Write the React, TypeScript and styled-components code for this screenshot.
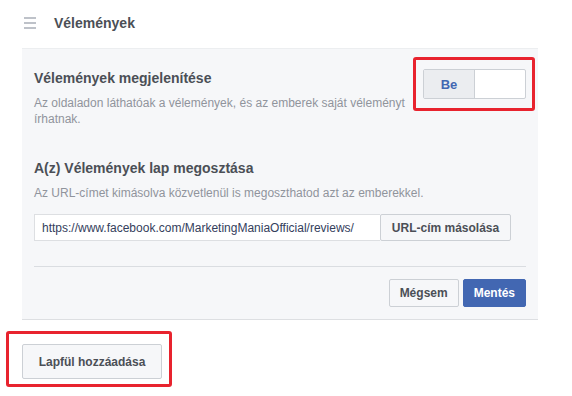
import React from "react";
import styled, { createGlobalStyle } from "styled-components";

const Global = createGlobalStyle`
  html, body { margin: 0; padding: 0; background: #ffffff; }
  body { font-family: "Liberation Sans", Arial, Helvetica, sans-serif; }
  * { box-sizing: border-box; }
`;

const Page = styled.div`
  width: 572px;
  min-height: 396px;
  padding: 0 34px 17px 22px;
`;

const Header = styled.div`
  height: 49px;
  display: flex;
  align-items: center;
  gap: 18px;
  padding-left: 2px;
  padding-bottom: 2px;
  border-bottom: 1px solid #eceef0;
`;

const Burger = styled.span`
  display: flex;
  flex-direction: column;
  gap: 3px;
  width: 12px;
  & > i {
    display: block;
    height: 2px;
    background: #bec2c9;
  }
`;

const HeaderTitle = styled.h1`
  margin: 0;
  font-size: 14px;
  font-weight: bold;
  color: #4b4f56;
`;

const Panel = styled.div`
  background: #f6f7f9;
  border-bottom: 1px solid #dddfe2;
  padding: 20px 12px 12px;
  display: flex;
  flex-direction: column;
`;

const Row = styled.div`
  display: flex;
  justify-content: space-between;
  align-items: flex-start;
`;

const Section = styled.div<{ $top?: number }>`
  margin-top: ${(p) => p.$top ?? 0}px;
`;

const Title = styled.div`
  font-size: 14px;
  line-height: 18px;
  font-weight: bold;
  color: #4b4f56;
`;

const Desc = styled.div<{ $width?: number }>`
  margin-top: 8px;
  font-size: 12px;
  line-height: 16px;
  color: #90949c;
  width: ${(p) => (p.$width ? `${p.$width}px` : "auto")};
`;

const ToggleWrap = styled.div`
  position: relative;
`;

const Toggle = styled.div`
  display: flex;
  width: 103px;
  height: 30px;
  border: 1px solid #ccd0d5;
  border-radius: 2px;
  background: #fff;
  overflow: hidden;
`;

const ToggleOn = styled.div`
  width: 51px;
  display: flex;
  align-items: center;
  justify-content: center;
  background: #ebedf0;
  border-right: 1px solid #ccd0d5;
  color: #4267b2;
  font-weight: bold;
  font-size: 13px;
`;

const Mark = styled.span<{ $l: number; $t: number; $r: number; $b: number }>`
  position: absolute;
  left: ${(p) => p.$l}px;
  top: ${(p) => p.$t}px;
  right: ${(p) => p.$r}px;
  bottom: ${(p) => p.$b}px;
  border: 3px solid #e8232e;
  border-radius: 3px;
  pointer-events: none;
`;

const UrlRow = styled.div`
  display: flex;
  margin-top: 13px;
  height: 27px;
`;

const UrlInput = styled.div`
  width: 346px;
  height: 27px;
  display: flex;
  align-items: center;
  padding: 0 7px;
  background: #fff;
  border: 1px solid #dddfe2;
  border-right: none;
  font-size: 12px;
  color: #34405c;
  white-space: nowrap;
  overflow: hidden;
`;

const Button = styled.button<{ $primary?: boolean; $h?: number; $w?: number }>`
  height: ${(p) => p.$h ?? 28}px;
  width: ${(p) => (p.$w ? `${p.$w}px` : "auto")};
  padding: 0 10px;
  display: inline-flex;
  align-items: center;
  justify-content: center;
  font-family: inherit;
  font-size: 12px;
  font-weight: bold;
  border-radius: 2px;
  border: 1px solid ${(p) => (p.$primary ? "#4267b2" : "#ccd0d5")};
  background: ${(p) => (p.$primary ? "#4267b2" : "#f6f7f9")};
  color: ${(p) => (p.$primary ? "#ffffff" : "#4b4f56")};
  cursor: pointer;
`;

const Divider = styled.div`
  margin-top: 25px;
  height: 1px;
  background: #dadde1;
`;

const Actions = styled.div`
  display: flex;
  justify-content: flex-end;
  gap: 4px;
  margin-top: 12px;
`;

const Footer = styled.div`
  margin-top: 24px;
  display: flex;
`;

const FooterWrap = styled.div`
  position: relative;
  display: flex;
`;

export default function App() {
  return (
    <>
      <Global />
      <Page>
        <Header>
          <Burger>
            <i />
            <i />
            <i />
          </Burger>
          <HeaderTitle>Vélemények</HeaderTitle>
        </Header>
        <Panel>
          <Row>
            <div>
              <Title>Vélemények megjelenítése</Title>
              <Desc $width={382}>
                Az oldaladon láthatóak a vélemények, és az emberek saját véleményt írhatnak.
              </Desc>
            </div>
            <ToggleWrap>
              <Toggle>
                <ToggleOn>Be</ToggleOn>
              </Toggle>
              <Mark $l={-10} $t={-12} $r={-9} $b={-12} />
            </ToggleWrap>
          </Row>
          <Section $top={32}>
            <Title>A(z) Vélemények lap megosztása</Title>
            <Desc>Az URL-címet kimásolva közvetlenül is megoszthatod azt az emberekkel.</Desc>
            <UrlRow>
              <UrlInput>https://www.facebook.com/MarketingManiaOfficial/reviews/</UrlInput>
              <Button $h={27} $w={131}>URL-cím másolása</Button>
            </UrlRow>
          </Section>
          <Divider />
          <Actions>
            <Button>Mégsem</Button>
            <Button $primary>Mentés</Button>
          </Actions>
        </Panel>
        <Footer>
          <FooterWrap>
            <Button $h={35} $w={140}>Lapfül hozzáadása</Button>
            <Mark $l={-16} $t={-13} $r={-10} $b={-8} />
          </FooterWrap>
        </Footer>
      </Page>
    </>
  );
}
